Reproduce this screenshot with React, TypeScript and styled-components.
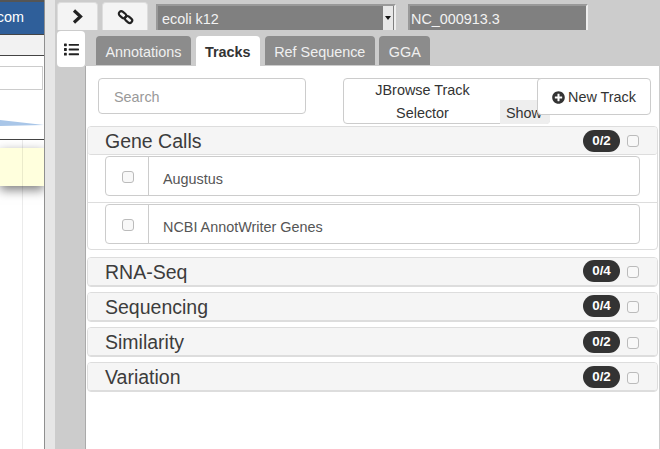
import React from 'react'
import styled, { createGlobalStyle } from 'styled-components'
import { FaList, FaPlusCircle } from 'react-icons/fa'

const GlobalStyle = createGlobalStyle`
  html, body {
    margin: 0;
    padding: 0;
    background: #fff;
  }
  * {
    box-sizing: border-box;
  }
`

const Page = styled.div`
  display: flex;
  width: 660px;
  height: 449px;
  overflow: hidden;
  font-family: 'Liberation Sans', Arial, sans-serif;
  font-size: 14.4px;
  color: #333;
`

// Left pane: the part of the main window still visible behind the tool panel
const LeftPane = styled.div`
  position: relative;
  width: 45px;
  flex: none;
  display: flex;
  flex-direction: column;
  overflow: hidden;
  background: #fff;
  border-right: 1px solid #8f8f8f;
`

const TopEdge = styled.div`
  height: 2px;
  background: #555;
`

const BlueBar = styled.div`
  height: 33px;
  margin-left: -10px;
  background: #2f5f9a;
  border-bottom: 1px solid #444;
  color: #fff;
  line-height: 30px;
  text-align: right;
  padding-right: 20px;
  white-space: nowrap;
`

const MenuBand = styled.div`
  height: 21px;
  background: #f2f2f2;
  border-bottom: 1px solid #444;
`

const FieldBand = styled.div`
  height: 45px;
  padding-top: 10px;
`

const FakeField = styled.div`
  width: 43px;
  height: 24px;
  border: 1px solid #ccc;
  border-left: none;
`

const Wedge = styled.svg`
  display: block;
  width: 44px;
  height: 38px;
`

const RuleBand = styled.div`
  height: 9px;
  border-top: 1px solid #444;
`

const Note = styled.div`
  height: 38px;
  background: #ffffdd;
  box-shadow: 0 4px 10px rgba(0, 0, 0, 0.5);
`

const GridLine = styled.div`
  position: absolute;
  left: 22px;
  top: 140px;
  bottom: 0;
  width: 1px;
  background: rgba(0, 0, 0, 0.08);
`

const Splitter = styled.div`
  width: 10px;
  flex: none;
  background: #e6e6e6;
`

const RightPane = styled.div`
  flex: 1;
  min-width: 0;
  background: #ccc;
  display: flex;
  flex-direction: column;
`

const TopBar = styled.div`
  height: 30px;
  display: flex;
  align-items: flex-end;
  padding-left: 2px;
`

const ToolButton = styled.button<{ $w: number }>`
  width: ${(p) => p.$w}px;
  height: 28px;
  margin-right: 4px;
  padding: 0;
  display: flex;
  align-items: center;
  justify-content: center;
  background: #f4f4f4;
  border: 1px solid #ddd;
  border-bottom: none;
  border-radius: 4px 4px 0 0;
  color: #222;
`

const GreyField = styled.div<{ $w: number; $ml: number; $pad: number }>`
  position: relative;
  width: ${(p) => p.$w}px;
  height: 26px;
  margin-left: ${(p) => p.$ml}px;
  background: #808080;
  border-top: 2px solid #999;
  border-left: 2px solid #999;
  border-right: 2px solid #eee;
  color: #f2f2f2;
  line-height: 26px;
  padding-left: ${(p) => p.$pad}px;
`

const SelectArrow = styled.span`
  position: absolute;
  right: 1px;
  top: 0;
  bottom: 0;
  width: 10px;
  background: #e8e8e8;
  &::after {
    content: '';
    position: absolute;
    left: 2px;
    top: 10px;
    border: 3px solid transparent;
    border-top: 4px solid #111;
  }
`

const Body = styled.div`
  flex: 1;
  min-height: 0;
  display: flex;
  padding-left: 2px;
`

const SideColumn = styled.div`
  width: 28px;
  flex: none;
  padding-top: 1px;
`

const SideTab = styled.div`
  width: 28px;
  height: 36px;
  display: flex;
  align-items: center;
  justify-content: center;
  background: #fff;
  border-radius: 4px;
  color: #222;
  font-size: 15px;
`

const Main = styled.div`
  flex: 1;
  min-width: 0;
  display: flex;
  flex-direction: column;
  padding-right: 1px;
`

const TabRow = styled.div`
  height: 36px;
  display: flex;
  align-items: flex-end;
  gap: 4.5px;
  padding-left: 11px;
`

const Tab = styled.div<{ $active?: boolean }>`
  height: ${(p) => (p.$active ? 30 : 29)}px;
  margin-bottom: ${(p) => (p.$active ? 0 : 1)}px;
  padding: 0 9.5px;
  border-radius: 4px 4px 0 0;
  background: ${(p) => (p.$active ? '#fff' : '#8c8c8c')};
  color: ${(p) => (p.$active ? '#333' : '#f0f0f0')};
  font-weight: ${(p) => (p.$active ? 700 : 400)};
  line-height: 32px;
`

const Content = styled.div`
  flex: 1;
  min-height: 0;
  background: #fff;
  border-left: 1px solid #aaa;
`

const SearchRow = styled.div`
  height: 60px;
  display: flex;
  align-items: flex-start;
  padding: 12px 0 0 12px;
`

const SearchBox = styled.div`
  width: 208px;
  height: 36px;
  border: 1px solid #ccc;
  border-radius: 4px;
  color: #999;
  line-height: 36px;
  padding-left: 15px;
`

const SelectorBox = styled.div`
  position: relative;
  width: 207px;
  height: 46px;
  margin-left: 37px;
  border: 1px solid #ccc;
  border-radius: 4px;
  line-height: 23px;
`

const SelectorLabel = styled.div`
  width: 157px;
  padding: 0 14px;
  text-align: center;
`

const ShowButton = styled.div`
  position: absolute;
  right: -1px;
  bottom: -1px;
  width: 50px;
  height: 24px;
  background: #eee;
  border-radius: 0 0 4px 0;
  line-height: 26px;
  padding-left: 6px;
`

const NewTrack = styled.button`
  width: 114px;
  height: 37px;
  margin-left: -13px;
  padding: 1px 0 0;
  position: relative;
  display: flex;
  align-items: center;
  justify-content: center;
  gap: 3px;
  background: #fff;
  border: 1px solid #ccc;
  border-radius: 4px;
  color: #333;
  font-family: inherit;
  font-size: 14.4px;
`

const Groups = styled.div`
  padding: 0 1px;
`

const Group = styled.section`
  margin-bottom: 5.33px;
  border: 1px solid #ddd;
  border-radius: 4px;
  background: #fff;
  &:first-child {
    margin-bottom: 6.5px;
  }
`

const GroupHeader = styled.div`
  height: 28px;
  display: flex;
  align-items: center;
  padding: 0 18px 0 17px;
  background: #f5f5f5;
  border-radius: 3px;
  border-bottom: 1px solid #ddd;
`

const GroupTitle = styled.h4`
  flex: 1;
  margin: 0;
  padding-top: 2px;
  color: #3c3c3c;
  font-size: 19.5px;
  font-weight: 400;
  line-height: 29px;
`

const Count = styled.span`
  width: 37px;
  height: 22px;
  margin-right: 7px;
  background: #333;
  border-radius: 11px;
  color: #fff;
  font-size: 13.4px;
  font-weight: 700;
  line-height: 22px;
  text-align: center;
`

const Check = styled.span`
  display: block;
  width: 12px;
  height: 12px;
  flex: none;
  background: #f8f8f8;
  border: 1px solid #bbb;
  border-radius: 3px;
`

const HeaderCheck = styled(Check)`
  margin-top: 2px;
`

const TrackRow = styled.div`
  height: 47px;
  padding: 1px 17px 0 17px;
  & + & {
    border-top: 1px solid #ddd;
  }
`

const TrackGroup = styled.div`
  height: 40px;
  display: flex;
  border: 1px solid #ccc;
  border-radius: 4px;
`

const TrackCheck = styled.div`
  width: 43px;
  flex: none;
  padding-top: 14px;
  padding-left: 16px;
  border-right: 1px solid #ccc;
`

const TrackName = styled.div`
  padding-left: 14px;
  color: #555;
  line-height: 45px;
`

const otherGroups = [
  { name: 'RNA-Seq', count: '0/4' },
  { name: 'Sequencing', count: '0/4' },
  { name: 'Similarity', count: '0/2' },
  { name: 'Variation', count: '0/2' },
]

function ChevronIcon() {
  return (
    <svg width="12" height="15" viewBox="0 0 12 15">
      <polyline points="2,1.5 8.5,7.5 2,13.5" fill="none" stroke="#222" strokeWidth="3.2" />
    </svg>
  )
}

function ChainIcon() {
  return (
    <svg width="17" height="16" viewBox="0 0 17 16">
      <g fill="none" stroke="#222" strokeWidth="2.2">
        <rect x="1.5" y="3.2" width="8" height="5" rx="2.5" transform="rotate(40 5.5 5.7)" />
        <rect x="7.5" y="8" width="8" height="5" rx="2.5" transform="rotate(40 11.5 10.5)" />
      </g>
    </svg>
  )
}

export default function App() {
  return (
    <Page>
      <GlobalStyle />
      <LeftPane>
        <TopEdge />
        <BlueBar>com</BlueBar>
        <MenuBand />
        <FieldBand>
          <FakeField />
        </FieldBand>
        <Wedge viewBox="0 0 44 38">
          <polygon points="0,19 44,24 0,25" fill="#a9c6e8" />
        </Wedge>
        <RuleBand />
        <Note />
        <GridLine />
      </LeftPane>
      <Splitter />
      <RightPane>
        <TopBar>
          <ToolButton $w={41}>
            <ChevronIcon />
          </ToolButton>
          <ToolButton $w={46}>
            <ChainIcon />
          </ToolButton>
          <GreyField $w={240} $ml={4} $pad={4}>
            ecoli k12
            <SelectArrow />
          </GreyField>
          <GreyField $w={180} $ml={12} $pad={1}>
            NC_000913.3
          </GreyField>
        </TopBar>
        <Body>
          <SideColumn>
            <SideTab>
              <FaList />
            </SideTab>
          </SideColumn>
          <Main>
            <TabRow>
              <Tab>Annotations</Tab>
              <Tab $active>Tracks</Tab>
              <Tab>Ref Sequence</Tab>
              <Tab>GGA</Tab>
            </TabRow>
            <Content>
              <SearchRow>
                <SearchBox>Search</SearchBox>
                <SelectorBox>
                  <SelectorLabel>JBrowse Track Selector</SelectorLabel>
                  <ShowButton>Show</ShowButton>
                </SelectorBox>
                <NewTrack>
                  <FaPlusCircle size={13} />
                  New Track
                </NewTrack>
              </SearchRow>
              <Groups>
                <Group>
                  <GroupHeader>
                    <GroupTitle>Gene Calls</GroupTitle>
                    <Count>0/2</Count>
                    <Check />
                  </GroupHeader>
                  <TrackRow>
                    <TrackGroup>
                      <TrackCheck>
                        <Check />
                      </TrackCheck>
                      <TrackName>Augustus</TrackName>
                    </TrackGroup>
                  </TrackRow>
                  <TrackRow>
                    <TrackGroup>
                      <TrackCheck>
                        <Check />
                      </TrackCheck>
                      <TrackName>NCBI AnnotWriter Genes</TrackName>
                    </TrackGroup>
                  </TrackRow>
                </Group>
                {otherGroups.map((g) => (
                  <Group key={g.name}>
                    <GroupHeader>
                      <GroupTitle>{g.name}</GroupTitle>
                      <Count>{g.count}</Count>
                      <HeaderCheck />
                    </GroupHeader>
                  </Group>
                ))}
              </Groups>
            </Content>
          </Main>
        </Body>
      </RightPane>
    </Page>
  )
}
